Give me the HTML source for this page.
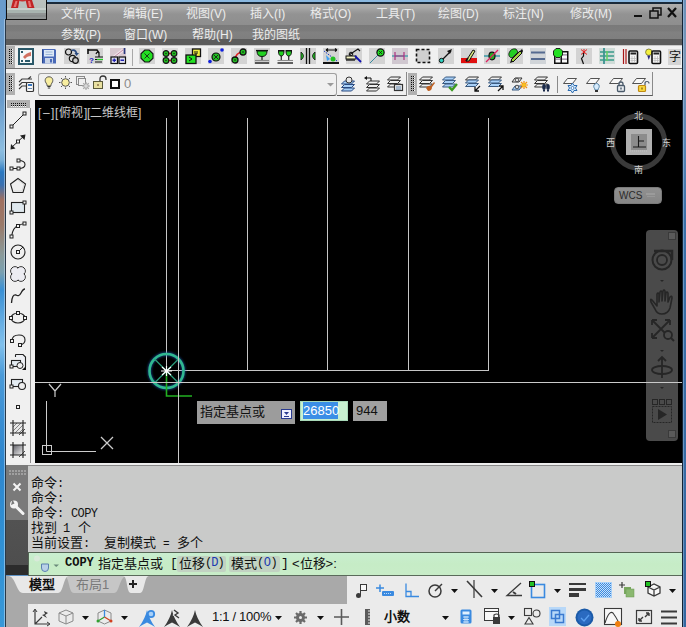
<!DOCTYPE html><html lang="zh-CN"><head><meta charset="utf-8"><style>
*{margin:0;padding:0;box-sizing:border-box}
html,body{width:686px;height:627px;overflow:hidden;background:#5f93c6;font-family:"Liberation Sans",sans-serif}
.a{position:absolute}
.t{position:absolute;white-space:nowrap}
svg{overflow:visible}
</style></head><body><div class="a" style="left:0px;top:0px;width:5px;height:627px;background:linear-gradient(to bottom,#6a9ccc 0,#6a9ccc 100px,#8cbde0 150px,#7ab0d8 160px,#2a78c0 172px,#3a70b0 185px,#a07060 200px,#9a7a6a 225px,#8a9a9a 255px,#7aa0b0 272px,#3a90d4 290px,#6ab0e4 325px,#80c0ec 345px,#4a9ad8 375px,#3a8ed2 420px,#2e86ce 460px,#3090d4 540px,#3898d8 627px)"></div>
<div class="a" style="left:682px;top:0px;width:4px;height:627px;background:linear-gradient(to bottom,#6a90b8 0,#7898b8 60px,#5a88b8 140px,#3a70a8 220px,#3468a0 627px)"></div>
<div class="a" style="left:682px;top:0px;width:1px;height:627px;background:#142232"></div>
<div class="a" style="left:683px;top:0px;width:1px;height:627px;background:rgba(200,225,250,.35)"></div>
<div class="a" style="left:6px;top:0px;width:676px;height:46px;background:linear-gradient(to bottom,#8ab8e0 0,#8ab8e0 2px,#1a2a3a 2px,#1a2a3a 4px,#b0aeac 4px,#a8a8a8 8px,#9c9c9c 11px,#939393 14px,#8e8e8e 25px,#7a7a7a 25px,#7c7c7c 31px,#818181 32px,#7f7f7f 39px,#5c5c5c 39px,#5c5c5c 45px,#c8c8c8 45px)"></div>
<div class="a" style="left:6px;top:0px;width:41px;height:20px;background:linear-gradient(to bottom,#bcc2be 0,#b8c0bc 8px,#c4cac6 9px,#a4aeac 11px,#96a09e 13px,#8c8c8c 18px);border:1px solid #101010;border-top:none"></div>
<svg class="a" style="left:6px;top:0px" width="41" height="20" viewBox="0 0 41 20"><path d="M5 8 L12 8 L13.5 0 L7 0Z M21.5 8 L28.5 8 L26 0 L19.5 0Z" fill="#c02424"/><path d="M12 0 Q16.5 3 21 0Z" fill="#c83030"/><path d="M7.5 7 L10 7 L11.5 1 L9.5 1Z M23 7 L25.5 7 L24 1 L22 1Z" fill="#e87070"/><rect x="1" y="8" width="39" height="2" fill="#c8d0cc"/><rect x="1" y="10" width="39" height="3" fill="#a8b4b0"/><rect x="1" y="13" width="39" height="6" fill="#909494"/><rect x="1" y="15" width="39" height="2" fill="#888c8c"/></svg>
<div class="a" style="left:4px;top:19px;width:1px;height:608px;background:rgba(220,235,250,.45)"></div>
<div class="a" style="left:5px;top:19px;width:1px;height:608px;background:#283848"></div>
<div class="t" style="left:61px;top:7px;color:#ececec;font-size:12px;line-height:14px">文件(F)</div>
<div class="t" style="left:123px;top:7px;color:#ececec;font-size:12px;line-height:14px">编辑(E)</div>
<div class="t" style="left:186px;top:7px;color:#ececec;font-size:12px;line-height:14px">视图(V)</div>
<div class="t" style="left:250px;top:7px;color:#ececec;font-size:12px;line-height:14px">插入(I)</div>
<div class="t" style="left:310px;top:7px;color:#ececec;font-size:12px;line-height:14px">格式(O)</div>
<div class="t" style="left:376px;top:7px;color:#ececec;font-size:12px;line-height:14px">工具(T)</div>
<div class="t" style="left:438px;top:7px;color:#ececec;font-size:12px;line-height:14px">绘图(D)</div>
<div class="t" style="left:503px;top:7px;color:#ececec;font-size:12px;line-height:14px">标注(N)</div>
<div class="t" style="left:570px;top:7px;color:#ececec;font-size:12px;line-height:14px">修改(M)</div>
<div class="t" style="left:61px;top:28px;color:#ececec;font-size:12px;line-height:14px">参数(P)</div>
<div class="t" style="left:124px;top:28px;color:#ececec;font-size:12px;line-height:14px">窗口(W)</div>
<div class="t" style="left:192px;top:28px;color:#ececec;font-size:12px;line-height:14px">帮助(H)</div>
<div class="t" style="left:252px;top:28px;color:#ececec;font-size:12px;line-height:14px">我的图纸</div>
<svg class="a" style="left:630px;top:6px" width="50" height="16" viewBox="0 0 50 16"><rect x="4" y="9" width="8" height="2" fill="#111"/><rect x="20" y="5" width="8" height="7" fill="none" stroke="#111" stroke-width="1.5"/><path d="M23 5 V2 H31 V9 H28" fill="none" stroke="#111" stroke-width="1.5"/><path d="M38 2 L46 11 M46 2 L38 11" stroke="#111" stroke-width="2.2"/></svg>
<div class="a" style="left:6px;top:46px;width:676px;height:23px;background:#f0f0f0;border-bottom:1px solid #707070"></div>
<svg class="a" style="left:6px;top:46px" width="9" height="22" viewBox="0 0 9 22"><rect width="9" height="22" fill="#b0b0b0"/><rect x="3" y="3" width="1" height="1" fill="#101010"/><rect x="5" y="3" width="1" height="1" fill="#101010"/><rect x="6" y="3" width="1" height="1" fill="#f8f8f8"/><rect x="3" y="5" width="1" height="1" fill="#101010"/><rect x="5" y="5" width="1" height="1" fill="#101010"/><rect x="6" y="5" width="1" height="1" fill="#f8f8f8"/><rect x="3" y="7" width="1" height="1" fill="#101010"/><rect x="5" y="7" width="1" height="1" fill="#101010"/><rect x="6" y="7" width="1" height="1" fill="#f8f8f8"/><rect x="3" y="9" width="1" height="1" fill="#101010"/><rect x="5" y="9" width="1" height="1" fill="#101010"/><rect x="6" y="9" width="1" height="1" fill="#f8f8f8"/><rect x="3" y="11" width="1" height="1" fill="#101010"/><rect x="5" y="11" width="1" height="1" fill="#101010"/><rect x="6" y="11" width="1" height="1" fill="#f8f8f8"/><rect x="3" y="13" width="1" height="1" fill="#101010"/><rect x="5" y="13" width="1" height="1" fill="#101010"/><rect x="6" y="13" width="1" height="1" fill="#f8f8f8"/><rect x="3" y="15" width="1" height="1" fill="#101010"/><rect x="5" y="15" width="1" height="1" fill="#101010"/><rect x="6" y="15" width="1" height="1" fill="#f8f8f8"/><rect x="3" y="17" width="1" height="1" fill="#101010"/><rect x="5" y="17" width="1" height="1" fill="#101010"/><rect x="6" y="17" width="1" height="1" fill="#f8f8f8"/></svg>
<svg class="a" style="left:18px;top:48px" width="16" height="16" viewBox="0 0 16 16"><rect x="1" y="1" width="14" height="15" fill="#f4f8f8" stroke="#2a5868" stroke-width="2"/><path d="M5 9 Q8 5 13 4 L13 8 Q9 8 7 11Z" fill="#d07060"/><rect x="3" y="3" width="2" height="2" fill="#2a5868"/><rect x="3" y="12" width="2" height="2" fill="#2a5868"/><rect x="7" y="12" width="5" height="2" fill="#2a5868"/></svg>
<svg class="a" style="left:41px;top:48px" width="16" height="16" viewBox="0 0 16 16"><path d="M1 1 H14 L15 2 V15.5 H1Z" fill="#4a6ab8"/><rect x="3" y="2" width="10" height="6.5" fill="#dce8f6"/><path d="M4.5 4H11.5M4.5 6.5H11.5" stroke="#8aa8d0" stroke-width=".8"/><rect x="4" y="10" width="8" height="5.5" fill="#c8d4e8"/><rect x="9" y="11" width="2" height="3.5" fill="#4a6ab8"/><path d="M1.5 1.5 V15" stroke="#2a4a90" stroke-width="1"/></svg>
<svg class="a" style="left:64px;top:48px" width="16" height="16" viewBox="0 0 16 16"><rect x="0" y="0" width="16" height="16" fill="#d3d3d3"/><circle cx="4.5" cy="4" r="3" fill="#d8d8d8" stroke="#111" stroke-width="1.2"/><circle cx="8.5" cy="10.5" r="3.2" fill="#d8d8d8" stroke="#111" stroke-width="1.2"/><circle cx="11.5" cy="12.5" r="2.8" fill="#c8c8c8" stroke="#111" stroke-width="1.2"/><path d="M7.5 2.5 Q11 1 12.5 5" stroke="#2a4a80" stroke-width="1.8" fill="none"/><path d="M10.5 5 L15 5 L12.5 8Z" fill="#2a4a80"/></svg>
<svg class="a" style="left:87px;top:48px" width="16" height="16" viewBox="0 0 16 16"><rect x="0" y="0" width="16" height="16" fill="#d3d3d3"/><path d="M1 1 V6 M1 2 H10 L12 5" stroke="#111" stroke-width="1.6" fill="none"/><path d="M9 6 Q10 3 12 5 V9" stroke="#111" stroke-width="1.2" fill="none"/><text x="2" y="15" font-size="8" font-family="Liberation Sans" fill="#2020c0" font-weight="bold">?</text><path d="M8 9H16M8 11.5H16M8 14H15" stroke="#111" stroke-width="1.2"/><path d="M10 11.5H16" stroke="#20d020" stroke-width="1.2"/></svg>
<svg class="a" style="left:110px;top:48px" width="16" height="16" viewBox="0 0 16 16"><rect x="0" y="0" width="16" height="16" fill="#dcd4d8"/><rect x="0" y="0" width="16" height="9" fill="#d8c8d0"/><path d="M4 9 L13 2" stroke="#f0e0e8" stroke-width="3"/><path d="M4 9 L13 2" stroke="#c090a8" stroke-width="1"/><path d="M14.5 0 V6" stroke="#2a3a80" stroke-width="1.6"/><rect x="1" y="9" width="6.5" height="6.5" fill="#e0e0f0" stroke="#111" stroke-width="1.2"/><rect x="9" y="9" width="6.5" height="6.5" fill="#e0e0f0" stroke="#111" stroke-width="1.2"/><path d="M2.5 12.25H6M4.25 10.5V14M10.5 12.25H14" stroke="#2020b0" stroke-width="1.3"/></svg>
<div class="a" style="left:132px;top:49px;width:1px;height:17px;background:#a8a8a8"></div>
<svg class="a" style="left:139px;top:48px" width="16" height="16" viewBox="0 0 16 16"><rect x="0" y="0" width="16" height="16" fill="#d3d3d3"/><path d="M5.8 2 H10.2 L14 5.8 V10.2 L10.2 14 H5.8 L2 10.2 V5.8Z" fill="#22e022" stroke="#111" stroke-width="1.1"/><path d="M5.5 5.5 L10.5 10.5 M10.5 5.5 L5.5 10.5" stroke="#111" stroke-width=".8"/></svg>
<svg class="a" style="left:162px;top:48px" width="16" height="16" viewBox="0 0 16 16"><rect x="0" y="0" width="16" height="16" fill="#dcdcdc"/><path d="M4 5.5H12M4 12.5H12" stroke="#d02020" stroke-width="1.5"/><circle cx="4" cy="5.5" r="2.8" fill="#22c022" stroke="#111" stroke-width="1.2"/><circle cx="4" cy="5.5" r=".7" fill="#111"/><circle cx="12" cy="5.5" r="2.8" fill="#22c022" stroke="#111" stroke-width="1.2"/><circle cx="12" cy="5.5" r=".7" fill="#111"/><circle cx="4" cy="12.5" r="2.8" fill="#22c022" stroke="#111" stroke-width="1.2"/><circle cx="4" cy="12.5" r=".7" fill="#111"/><circle cx="12" cy="12.5" r="2.8" fill="#22c022" stroke="#111" stroke-width="1.2"/><circle cx="12" cy="12.5" r=".7" fill="#111"/></svg>
<svg class="a" style="left:185px;top:48px" width="16" height="16" viewBox="0 0 16 16"><rect x="0" y="0" width="16" height="16" fill="#d3d3d3"/><rect x="7.5" y="1" width="8" height="7.5" fill="#f0f040" stroke="#111" stroke-width="1.3"/><path d="M10 3V6H12V3" stroke="#111" stroke-width="1" fill="none"/><rect x="1" y="7" width="10" height="8.5" fill="#22e022" stroke="#111" stroke-width="1.3"/><path d="M4 9 L7 11 L4 13" stroke="#111" stroke-width="1" fill="none"/></svg>
<svg class="a" style="left:208px;top:48px" width="16" height="16" viewBox="0 0 16 16"><rect x="0" y="0" width="16" height="16" fill="#d3d3d3"/><circle cx="8" cy="9" r="4" fill="#22c022" stroke="#111" stroke-width="1.2"/><path d="M6 7L10 11M10 7L6 11" stroke="#111" stroke-width=".8"/><circle cx="14" cy="2" r="1.8" fill="#1020e0"/><circle cx="2" cy="13.5" r="1.8" fill="#1020e0"/></svg>
<svg class="a" style="left:231px;top:48px" width="16" height="16" viewBox="0 0 16 16"><rect x="0" y="0" width="16" height="16" fill="#d3d3d3"/><path d="M4 12 Q4.5 4.5 12 4" stroke="#e02020" stroke-width="1.6" fill="none"/><circle cx="12" cy="4" r="3" fill="#22c022" stroke="#111" stroke-width="1.3"/><circle cx="4" cy="12" r="3" fill="#22c022" stroke="#111" stroke-width="1.3"/><circle cx="12" cy="4" r=".8" fill="#111"/><circle cx="4" cy="12" r=".8" fill="#111"/></svg>
<svg class="a" style="left:254px;top:48px" width="16" height="16" viewBox="0 0 16 16"><rect x="0" y="0" width="16" height="16" fill="#d3d3d3"/><path d="M2 2.5 H14" stroke="#111" stroke-width="1.2"/><path d="M3 3 Q3 8.5 8 8.5 Q13 8.5 13 3Z" fill="#22d022" stroke="#111" stroke-width="1"/><path d="M8 8.5 V12" stroke="#111" stroke-width="1.2"/><path d="M1 12.5 H15" stroke="#8a8a8a" stroke-width="1.2"/><path d="M1 15 H15" stroke="#111" stroke-width="1.3"/></svg>
<svg class="a" style="left:277px;top:48px" width="16" height="16" viewBox="0 0 16 16"><path d="M1 2.5 H7.5 M8.5 2.5 H15" stroke="#111" stroke-width="1.1"/><path d="M1.5 3 Q1.5 8 4.25 8 Q7 8 7 3Z M9 3 Q9 8 11.75 8 Q14.5 8 14.5 3Z" fill="#22d022" stroke="#111" stroke-width="1"/><path d="M4.25 8V12M11.75 8V12" stroke="#111" stroke-width="1.1"/><path d="M0.5 12.5 H16" stroke="#8a8a8a" stroke-width="1.1"/><path d="M0.5 15 H16" stroke="#111" stroke-width="1.3"/></svg>
<svg class="a" style="left:300px;top:48px" width="16" height="16" viewBox="0 0 16 16"><rect x="0" y="0" width="16" height="16" fill="#d3d3d3"/><path d="M6.5 0V16M9.5 0V16" stroke="#111" stroke-width="1.3"/><path d="M1 4 Q6 8 1 12Z M15 4 Q10 8 15 12Z" fill="#22c022" stroke="#111" stroke-width=".8"/></svg>
<svg class="a" style="left:323px;top:48px" width="16" height="16" viewBox="0 0 16 16"><rect x="0" y="0" width="16" height="16" fill="#d3d3d3"/><path d="M3 2H14M3 2L5 0.5M3 2L5 3.5M14 2L12 .5M14 2L12 3.5" stroke="#111" stroke-width="1.1" fill="none"/><path d="M1 3 L14 13" stroke="#2040c0" stroke-width="1" stroke-dasharray="1.5 1"/><path d="M3 7L7 11L4 13Z" fill="#40a0f0"/><circle cx="10" cy="11" r="2.5" fill="#22c022"/><rect x="0" y="14" width="16" height="2" fill="#111"/></svg>
<svg class="a" style="left:346px;top:48px" width="16" height="16" viewBox="0 0 16 16"><rect x="0" y="0" width="16" height="16" fill="#d3d3d3"/><path d="M3 7 L9 3 L12 1 L14 3" stroke="#111" stroke-width="1.1" fill="none"/><circle cx="5" cy="6" r="1.8" fill="none" stroke="#111" stroke-width="1"/><rect x="0" y="8" width="10" height="3" fill="#f0f0c0" stroke="#111" stroke-width="1"/><path d="M0 12H9" stroke="#111" stroke-width="1.3"/><path d="M9 8 L15 14" stroke="#1010b0" stroke-width="1.8"/></svg>
<svg class="a" style="left:369px;top:48px" width="16" height="16" viewBox="0 0 16 16"><rect x="0" y="0" width="16" height="16" fill="#d3d3d3"/><path d="M1 15 L10 6" stroke="#3a8aa0" stroke-width="1"/><circle cx="11.5" cy="4.5" r="3.6" fill="#22e022" stroke="#111" stroke-width="1.2"/><path d="M10 3L13 6M13 3L10 6" stroke="#111" stroke-width=".8"/></svg>
<svg class="a" style="left:392px;top:48px" width="16" height="16" viewBox="0 0 16 16"><rect width="16" height="16" fill="#d0c8d0"/><path d="M0 8H16" stroke="#3a9aa8" stroke-width="1.3"/><path d="M3 4V12M12 4V12" stroke="#b03080" stroke-width="1.2"/><path d="M3 8H12" stroke="#b03080" stroke-width="1"/></svg>
<svg class="a" style="left:415px;top:48px" width="16" height="16" viewBox="0 0 16 16"><rect x="1.5" y="1.5" width="13" height="13" fill="#d0d0d0" stroke="#111" stroke-width="1.6" stroke-dasharray="3 2"/></svg>
<svg class="a" style="left:438px;top:48px" width="16" height="16" viewBox="0 0 16 16"><rect x="0" y="0" width="16" height="16" fill="#d3d3d3"/><path d="M4 12 L13 3" stroke="#111" stroke-width="1.2"/><path d="M14 1 L9 3 L12 6Z" fill="#111"/><circle cx="3.5" cy="12.5" r="2.2" fill="#30d0c0" stroke="#111" stroke-width="1"/></svg>
<svg class="a" style="left:461px;top:48px" width="16" height="16" viewBox="0 0 16 16"><rect x="0" y="0" width="16" height="16" fill="#d3d3d3"/><rect x="0" y="10" width="16" height="5" fill="#e01010"/><path d="M5 13 L12 2 L14 3 L8 13Z" fill="#d8e880" stroke="#111" stroke-width="1"/><path d="M5 13 L7 10" stroke="#111" stroke-width="1.5"/></svg>
<svg class="a" style="left:484px;top:48px" width="16" height="16" viewBox="0 0 16 16"><rect x="0" y="0" width="16" height="16" fill="#d3d3d3"/><path d="M0 8H16" stroke="#3a9aa8" stroke-width="1.5"/><ellipse cx="8" cy="8" rx="3" ry="3.8" fill="#22b022" stroke="#111" stroke-width="1.2"/><path d="M2 14 L14 2" stroke="#e02060" stroke-width="1.2"/></svg>
<svg class="a" style="left:507px;top:48px" width="16" height="16" viewBox="0 0 16 16"><rect x="0" y="0" width="16" height="16" fill="#d3d3d3"/><path d="M2 5 Q4 0 9 1 L11 4 L5 10 Q1 9 2 5Z" fill="#22d022" stroke="#111" stroke-width=".8"/><path d="M4 12 L13 3 L15 5 L6 14Z" fill="#a0d040" stroke="#111" stroke-width="1"/><path d="M4 12 L3 15 L6 14" fill="#111"/><path d="M13 3 L15 1 L16 3 L15 5Z" fill="#111"/></svg>
<svg class="a" style="left:530px;top:48px" width="16" height="16" viewBox="0 0 16 16"><rect x="0" y="0" width="16" height="16" fill="#d0d4d8"/><path d="M1 4.5H15M1 11H15" stroke="#556a90" stroke-width="1.8"/></svg>
<svg class="a" style="left:553px;top:48px" width="16" height="16" viewBox="0 0 16 16"><rect x="1" y="3" width="14.5" height="13" fill="#111"/><g fill="#f8f8f8"><rect x="2.5" y="4.5" width="5" height="2"/><rect x="9" y="4.5" width="5" height="2"/><rect x="2.5" y="8" width="5" height="2"/><rect x="9" y="8" width="5" height="2"/><rect x="2.5" y="11.5" width="5" height="3"/><rect x="9" y="11.5" width="5" height="3"/></g><g fill="#c8b8d0"><rect x="9" y="6.5" width="5" height="1.5"/><rect x="9" y="10" width="5" height="1.5"/><rect x="2.5" y="10" width="5" height="1.5"/></g><path d="M3 0.5H7L9.5 3V7L7 9.5H3L0.5 7V3Z" fill="#22e022" stroke="#111" stroke-width=".9"/></svg>
<svg class="a" style="left:576px;top:48px" width="16" height="16" viewBox="0 0 16 16"><rect x="0" y="0" width="16" height="16" fill="#d3d3d3"/><path d="M5 1.5 L11 6.5 M11 1.5 L5 6.5 M8 1 V6" stroke="#e02020" stroke-width="1"/><path d="M7.5 5 V8 L5.5 10.5 L7.5 16" stroke="#111" stroke-width="1.2" fill="none"/></svg>
<svg class="a" style="left:599px;top:48px" width="16" height="16" viewBox="0 0 16 16"><rect width="16" height="16" fill="#d0dcd8"/><path d="M5 0V16" stroke="#2a8a8a" stroke-width="1.6"/><path d="M1 4H15M1 8H15M1 12H15" stroke="#3a9a8a" stroke-width="1.3"/><path d="M8 3V13" stroke="#60d060" stroke-width="1.5"/></svg>
<svg class="a" style="left:622px;top:48px" width="16" height="16" viewBox="0 0 16 16"><path d="M1.5 1V16M4 1V16" stroke="#a81818" stroke-width="1.2"/><rect x="7" y="3" width="8.5" height="12.5" rx="1" fill="#f4f4f4" stroke="#111" stroke-width="1.6"/><rect x="8.5" y="4.5" width="5.5" height="2" fill="#222"/><path d="M10 8V14M12.5 8V14M8.5 10.5H14M8.5 12.5H14" stroke="#b8b8b8" stroke-width=".7"/></svg>
<svg class="a" style="left:645px;top:48px" width="16" height="16" viewBox="0 0 16 16"><circle cx="3.8" cy="4.2" r="3.2" fill="#f4f040" stroke="#5a5a20" stroke-width=".7"/><path d="M2.2 7.5 L3.8 12 L5.4 7.5Z" fill="#2a2a80"/><rect x="7" y="3" width="8.5" height="12.5" rx="1" fill="#f4f4f4" stroke="#111" stroke-width="1.6"/><rect x="8.5" y="4.5" width="5.5" height="2" fill="#222"/><path d="M10 8V14M12.5 8V14M8.5 10.5H14M8.5 12.5H14" stroke="#b8b8b8" stroke-width=".7"/></svg>
<div class="a" style="left:668px;top:49px;width:13px;height:16px;background:#d4d4d4"></div>
<div class="t" style="left:669px;top:50px;font-size:12px;line-height:14px;color:#111">字</div>
<div class="a" style="left:6px;top:69px;width:676px;height:31px;background:#f0f0f0"></div>
<svg class="a" style="left:6px;top:73px" width="9" height="22" viewBox="0 0 9 22"><rect width="9" height="22" fill="#b0b0b0"/><rect x="3" y="3" width="1" height="1" fill="#101010"/><rect x="5" y="3" width="1" height="1" fill="#101010"/><rect x="6" y="3" width="1" height="1" fill="#f8f8f8"/><rect x="3" y="5" width="1" height="1" fill="#101010"/><rect x="5" y="5" width="1" height="1" fill="#101010"/><rect x="6" y="5" width="1" height="1" fill="#f8f8f8"/><rect x="3" y="7" width="1" height="1" fill="#101010"/><rect x="5" y="7" width="1" height="1" fill="#101010"/><rect x="6" y="7" width="1" height="1" fill="#f8f8f8"/><rect x="3" y="9" width="1" height="1" fill="#101010"/><rect x="5" y="9" width="1" height="1" fill="#101010"/><rect x="6" y="9" width="1" height="1" fill="#f8f8f8"/><rect x="3" y="11" width="1" height="1" fill="#101010"/><rect x="5" y="11" width="1" height="1" fill="#101010"/><rect x="6" y="11" width="1" height="1" fill="#f8f8f8"/><rect x="3" y="13" width="1" height="1" fill="#101010"/><rect x="5" y="13" width="1" height="1" fill="#101010"/><rect x="6" y="13" width="1" height="1" fill="#f8f8f8"/><rect x="3" y="15" width="1" height="1" fill="#101010"/><rect x="5" y="15" width="1" height="1" fill="#101010"/><rect x="6" y="15" width="1" height="1" fill="#f8f8f8"/><rect x="3" y="17" width="1" height="1" fill="#101010"/><rect x="5" y="17" width="1" height="1" fill="#101010"/><rect x="6" y="17" width="1" height="1" fill="#f8f8f8"/></svg>
<div class="a" style="left:38px;top:73px;width:299px;height:23px;border:1px solid #a0a0a0;border-bottom:1px solid #5a5a5a;border-radius:3px;background:#f0f0f0"></div>
<div class="a" style="left:337px;top:72px;width:70px;height:24px;border-bottom:1px solid #5a5a5a;border-right:1px solid #8a8a8a"></div>
<div class="a" style="left:417px;top:72px;width:236px;height:24px;border-bottom:1px solid #5a5a5a;border-right:1px solid #8a8a8a"></div>
<svg class="a" style="left:408px;top:73px" width="9" height="22" viewBox="0 0 9 22"><rect width="9" height="22" fill="#b0b0b0"/><rect x="3" y="3" width="1" height="1" fill="#101010"/><rect x="5" y="3" width="1" height="1" fill="#101010"/><rect x="6" y="3" width="1" height="1" fill="#f8f8f8"/><rect x="3" y="5" width="1" height="1" fill="#101010"/><rect x="5" y="5" width="1" height="1" fill="#101010"/><rect x="6" y="5" width="1" height="1" fill="#f8f8f8"/><rect x="3" y="7" width="1" height="1" fill="#101010"/><rect x="5" y="7" width="1" height="1" fill="#101010"/><rect x="6" y="7" width="1" height="1" fill="#f8f8f8"/><rect x="3" y="9" width="1" height="1" fill="#101010"/><rect x="5" y="9" width="1" height="1" fill="#101010"/><rect x="6" y="9" width="1" height="1" fill="#f8f8f8"/><rect x="3" y="11" width="1" height="1" fill="#101010"/><rect x="5" y="11" width="1" height="1" fill="#101010"/><rect x="6" y="11" width="1" height="1" fill="#f8f8f8"/><rect x="3" y="13" width="1" height="1" fill="#101010"/><rect x="5" y="13" width="1" height="1" fill="#101010"/><rect x="6" y="13" width="1" height="1" fill="#f8f8f8"/><rect x="3" y="15" width="1" height="1" fill="#101010"/><rect x="5" y="15" width="1" height="1" fill="#101010"/><rect x="6" y="15" width="1" height="1" fill="#f8f8f8"/><rect x="3" y="17" width="1" height="1" fill="#101010"/><rect x="5" y="17" width="1" height="1" fill="#101010"/><rect x="6" y="17" width="1" height="1" fill="#f8f8f8"/></svg>
<div class="a" style="left:557px;top:76px;width:1px;height:17px;background:#8a8a8a"></div>
<svg class="a" style="left:18px;top:76px" width="16" height="16" viewBox="0 0 16 16"><path d="M1 6 L4 3 H14 M1 9.5 L4 6.5 H9 M1 13 L4 10 H8 M10 3 L13 0.5" stroke="#3a3a3a" stroke-width="1.1" fill="none"/><rect x="8.5" y="6.5" width="7" height="9" rx="1" fill="#f8f8f8" stroke="#333" stroke-width="1.2"/><rect x="10" y="8" width="4" height="2" fill="#3a78c0"/><path d="M10 12.5 H14" stroke="#6a8ab0" stroke-width="1"/></svg>
<svg class="a" style="left:44px;top:76px" width="16" height="16" viewBox="0 0 16 16"><path d="M5 0.8 C1.5 0.8 0.6 4 1.5 6 C2.3 7.5 3 8 3.2 10 H6.8 C7 8 7.7 7.5 8.5 6 C9.4 4 8.5 .8 5 .8Z" fill="#f8eea0" stroke="#444" stroke-width=".9"/><path d="M3.5 10.5 H6.5 M3.8 12 H6.2" stroke="#333" stroke-width="1.2"/></svg>
<svg class="a" style="left:59px;top:76px" width="16" height="16" viewBox="0 0 16 16"><circle cx="6.5" cy="6.5" r="3.8" fill="#f8eea0" stroke="#444" stroke-width=".9"/><path d="M6.5 0V1.5M6.5 11.5V13M0 6.5H1.5M11.5 6.5H13M2 2L3 3M10 10L11 11M11 2L10 3M2 11L3 10" stroke="#444" stroke-width=".9"/></svg>
<svg class="a" style="left:76px;top:76px" width="16" height="16" viewBox="0 0 16 16"><rect x="0.5" y="0.5" width="8" height="8" fill="none" stroke="#8a8a8a" stroke-width="1"/><rect x="2.5" y="2.5" width="7" height="7" fill="#f0f0f0" stroke="#8a8a8a" stroke-width="1"/><g stroke="#a8a8a8" stroke-width="1.1"><path d="M10 6V14M6 10H14M7.2 7.2L12.8 12.8M12.8 7.2L7.2 12.8"/></g><circle cx="10" cy="10" r="2.3" fill="#d8d8d8" stroke="#a0a0a0" stroke-width=".8"/></svg>
<svg class="a" style="left:93px;top:76px" width="16" height="16" viewBox="0 0 16 16"><path d="M7 6 V3 Q7 0 10 0 Q13 0 13 3 V4" stroke="#333" stroke-width="1.3" fill="none"/><rect x="0.5" y="5.5" width="9" height="7" fill="#e8e0a0" stroke="#5a5a3a" stroke-width="1"/><rect x="4.5" y="8" width="1" height="2" fill="#5a3a1a"/></svg>
<div class="a" style="left:110px;top:79px;width:10px;height:10px;border:2px solid #111;background:#fff"></div>
<div class="t" style="left:124px;top:77px;font-size:13px;line-height:14px;color:#8a8a8a">0</div>
<svg class="a" style="left:327px;top:83px" width="8" height="4" viewBox="0 0 8 4"><path d="M0 0H7L3.5 3.5Z" fill="#9a9a9a"/></svg>
<svg class="a" style="left:341px;top:76px" width="16" height="16" viewBox="0 0 16 16"><path d="M0.5 8.0 L3.5 5.0 H13.5 L10.5 8.0Z" fill="#a8d0f8" stroke="#2a4a80" stroke-width="1"/><path d="M0.5 11.5 L3.5 8.5 H13.5 L10.5 11.5Z" fill="#a8d0f8" stroke="#2a4a80" stroke-width="1"/><path d="M0.5 15.0 L3.5 12.0 H13.5 L10.5 15.0Z" fill="#a8d0f8" stroke="#2a4a80" stroke-width="1"/><circle cx="8" cy="4" r="3" fill="#e8e8e8" stroke="#333" stroke-width="1"/></svg>
<svg class="a" style="left:364px;top:76px" width="16" height="16" viewBox="0 0 16 16"><path d="M2.5 8.0 L5.5 5.0 H15.5 L12.5 8.0Z" fill="#f0f0f0" stroke="#333" stroke-width="1"/><path d="M2.5 11.5 L5.5 8.5 H15.5 L12.5 11.5Z" fill="#f0f0f0" stroke="#333" stroke-width="1"/><path d="M2.5 15.0 L5.5 12.0 H15.5 L12.5 15.0Z" fill="#f0f0f0" stroke="#333" stroke-width="1"/><path d="M2 2 H7 V5" stroke="#111" stroke-width="1" fill="none"/><path d="M0 2 L3 0 V4Z" fill="#111"/></svg>
<svg class="a" style="left:387px;top:76px" width="16" height="16" viewBox="0 0 16 16"><path d="M0.5 4.0 L3.5 1.0 H13.5 L10.5 4.0Z" fill="#f0f0f0" stroke="#333" stroke-width="1"/><path d="M0.5 7.5 L3.5 4.5 H13.5 L10.5 7.5Z" fill="#f0f0f0" stroke="#333" stroke-width="1"/><path d="M0.5 11.0 L3.5 8.0 H13.5 L10.5 11.0Z" fill="#f0f0f0" stroke="#333" stroke-width="1"/><rect x="7.5" y="8.5" width="8" height="6" fill="#f0f0f0" stroke="#333" stroke-width="1.2"/><path d="M9 11H14M9 13H14" stroke="#3a6aa0" stroke-width=".8"/></svg>
<svg class="a" style="left:419px;top:76px" width="16" height="16" viewBox="0 0 16 16"><path d="M0.5 4.0 L3.5 1.0 H13.5 L10.5 4.0Z" fill="#f0f0f0" stroke="#333" stroke-width="1"/><path d="M0.5 7.5 L3.5 4.5 H13.5 L10.5 7.5Z" fill="#f0f0f0" stroke="#333" stroke-width="1"/><path d="M0.5 11.0 L3.5 8.0 H13.5 L10.5 11.0Z" fill="#f0f0f0" stroke="#333" stroke-width="1"/><path d="M7 12 Q9 9 12 10 L15 6 L16 7 L13 11 Q13 15 9 15Z" fill="#c06020"/></svg>
<svg class="a" style="left:442px;top:76px" width="16" height="16" viewBox="0 0 16 16"><path d="M0.5 4.0 L3.5 1.0 H13.5 L10.5 4.0Z" fill="#a8d0f8" stroke="#3a5a80" stroke-width="1"/><path d="M0.5 7.5 L3.5 4.5 H13.5 L10.5 7.5Z" fill="#a8d0f8" stroke="#3a5a80" stroke-width="1"/><path d="M0.5 11.0 L3.5 8.0 H13.5 L10.5 11.0Z" fill="#a8d0f8" stroke="#3a5a80" stroke-width="1"/><path d="M7 11 L10 14 L15 8" stroke="#3a9a20" stroke-width="2.2" fill="none"/></svg>
<svg class="a" style="left:465px;top:76px" width="16" height="16" viewBox="0 0 16 16"><path d="M0.5 4.0 L3.5 1.0 H13.5 L10.5 4.0Z" fill="#f0f0f0" stroke="#333" stroke-width="1"/><path d="M0.5 7.0 L3.5 4.0 H13.5 L10.5 7.0Z" fill="#a8d0f8" stroke="#3a5a80" stroke-width="1"/><path d="M0.5 10.5 L3.5 7.5 H13.5 L10.5 10.5Z" fill="#a8d0f8" stroke="#3a5a80" stroke-width="1"/><path d="M15 10 L10 15 M10 11V15H14" stroke="#111" stroke-width="1.3" fill="none"/></svg>
<svg class="a" style="left:488px;top:76px" width="16" height="16" viewBox="0 0 16 16"><path d="M0.5 4.0 L3.5 1.0 H13.5 L10.5 4.0Z" fill="#f0f0f0" stroke="#333" stroke-width="1"/><path d="M0.5 7.0 L3.5 4.0 H13.5 L10.5 7.0Z" fill="#a8d0f8" stroke="#3a5a80" stroke-width="1"/><path d="M0.5 10.5 L3.5 7.5 H13.5 L10.5 10.5Z" fill="#a8d0f8" stroke="#3a5a80" stroke-width="1"/><path d="M10 15 L15 10 M11 10H15V14" stroke="#111" stroke-width="1.3" fill="none"/></svg>
<svg class="a" style="left:511px;top:76px" width="16" height="16" viewBox="0 0 16 16"><path d="M1 6 L4 2 H11 L8 6Z" fill="#f0f0f0" stroke="#333"/><path d="M1 14 L4 10 H11 L8 14Z" fill="#a8d0f8" stroke="#3a5a80"/><circle cx="6" cy="4" r="1.8" fill="#ddd" stroke="#333" stroke-width=".8"/><circle cx="6" cy="11" r="1.8" fill="#ddd" stroke="#333" stroke-width=".8"/><path d="M13 5V13M9 9H17M10 6L16 12M16 6L10 12" stroke="#f09010" stroke-width="1.2"/><circle cx="13" cy="9" r="2" fill="#f8c020"/></svg>
<svg class="a" style="left:534px;top:76px" width="16" height="16" viewBox="0 0 16 16"><path d="M0.5 4.0 L3.5 1.0 H13.5 L10.5 4.0Z" fill="#f0f0f0" stroke="#333" stroke-width="1"/><path d="M0.5 7.5 L3.5 4.5 H13.5 L10.5 7.5Z" fill="#f0f0f0" stroke="#333" stroke-width="1"/><path d="M0.5 11.0 L3.5 8.0 H13.5 L10.5 11.0Z" fill="#f0f0f0" stroke="#333" stroke-width="1"/><ellipse cx="10" cy="11" rx="1.8" ry="3" fill="#1a2a4a"/><ellipse cx="14" cy="11" rx="1.8" ry="3" fill="#1a2a4a"/><rect x="9" y="14" width="2" height="1.5" fill="#1a2a4a"/><rect x="13" y="14" width="2" height="1.5" fill="#1a2a4a"/></svg>
<svg class="a" style="left:563px;top:76px" width="16" height="16" viewBox="0 0 16 16"><path d="M0.5 7.5 L4.5 2.5 H13.5 L9.5 7.5Z" fill="#f8f8f8" stroke="#404040" stroke-width=".9"/><g stroke="#2a6ab0" stroke-width="1" fill="#d8ecfc"><path d="M9.5 7 L11 9.5 L14 9.5 L12.5 12 L14 14.5 L11 14.5 L9.5 17 L8 14.5 L5 14.5 L6.5 12 L5 9.5 L8 9.5Z"/></g><circle cx="9.5" cy="12" r="1.5" fill="#fff" stroke="#2a6ab0" stroke-width=".8"/></svg>
<svg class="a" style="left:586px;top:76px" width="16" height="16" viewBox="0 0 16 16"><path d="M0.5 7.5 L4.5 2.5 H13.5 L9.5 7.5Z" fill="#f8f8f8" stroke="#404040" stroke-width=".9"/><path d="M10.5 7.5 C8 7.5 7.3 10 8 11.5 C8.5 12.5 9 13 9 14 H12 C12 13 12.5 12.5 13 11.5 C13.7 10 13 7.5 10.5 7.5Z" fill="#d8ecfc" stroke="#4a7aa0" stroke-width=".9"/><rect x="9" y="14" width="3" height="2" fill="#333"/></svg>
<svg class="a" style="left:609px;top:76px" width="16" height="16" viewBox="0 0 16 16"><path d="M0.5 7.5 L4.5 2.5 H13.5 L9.5 7.5Z" fill="#f8f8f8" stroke="#404040" stroke-width=".9"/><path d="M10 9.5 V8 Q10 6 12 6 Q14 6 14 8 V9.5" stroke="#4a5a6a" stroke-width="1.3" fill="none"/><rect x="8.5" y="9.5" width="7" height="6" rx="1" fill="#e8ecf0" stroke="#4a5a6a" stroke-width="1.3"/><rect x="11.3" y="11.5" width="1.4" height="2" fill="#4a5a6a"/></svg>
<svg class="a" style="left:632px;top:76px" width="16" height="16" viewBox="0 0 16 16"><path d="M0.5 7.5 L4.5 2.5 H13.5 L9.5 7.5Z" fill="#f8f8f8" stroke="#404040" stroke-width=".9"/><path d="M13 9.5 V7.5 Q13 5.5 15 5.5 Q17 5.5 17 7.5" stroke="#4a5a6a" stroke-width="1.2" fill="none"/><rect x="6.5" y="9.5" width="7" height="6" rx="1" fill="#f8d840" stroke="#c08a10" stroke-width="1.2"/><rect x="9.3" y="11.5" width="1.4" height="2" fill="#8a6a10"/></svg>
<div class="a" style="left:6px;top:100px;width:29px;height:363px;background:#f0f0f0"></div>
<div class="a" style="left:30px;top:108px;width:1px;height:355px;background:#8c8c8c"></div>
<svg class="a" style="left:7px;top:100px" width="23" height="8" viewBox="0 0 23 8"><rect width="23" height="8" fill="#b0b0b0"/><rect x="4" y="3" width="1" height="1" fill="#101010"/><rect x="4" y="5" width="1" height="1" fill="#101010"/><rect x="4" y="6" width="1" height="1" fill="#f8f8f8"/><rect x="6" y="3" width="1" height="1" fill="#101010"/><rect x="6" y="5" width="1" height="1" fill="#101010"/><rect x="6" y="6" width="1" height="1" fill="#f8f8f8"/><rect x="8" y="3" width="1" height="1" fill="#101010"/><rect x="8" y="5" width="1" height="1" fill="#101010"/><rect x="8" y="6" width="1" height="1" fill="#f8f8f8"/><rect x="10" y="3" width="1" height="1" fill="#101010"/><rect x="10" y="5" width="1" height="1" fill="#101010"/><rect x="10" y="6" width="1" height="1" fill="#f8f8f8"/><rect x="12" y="3" width="1" height="1" fill="#101010"/><rect x="12" y="5" width="1" height="1" fill="#101010"/><rect x="12" y="6" width="1" height="1" fill="#f8f8f8"/><rect x="14" y="3" width="1" height="1" fill="#101010"/><rect x="14" y="5" width="1" height="1" fill="#101010"/><rect x="14" y="6" width="1" height="1" fill="#f8f8f8"/><rect x="16" y="3" width="1" height="1" fill="#101010"/><rect x="16" y="5" width="1" height="1" fill="#101010"/><rect x="16" y="6" width="1" height="1" fill="#f8f8f8"/><rect x="18" y="3" width="1" height="1" fill="#101010"/><rect x="18" y="5" width="1" height="1" fill="#101010"/><rect x="18" y="6" width="1" height="1" fill="#f8f8f8"/></svg>
<div class="a" style="left:35px;top:100px;width:647px;height:363px;background:#000"></div>
<svg class="a" style="left:0px;top:0px;pointer-events:none" width="686" height="627" viewBox="0 0 686 627"><rect x="166" y="118" width="1" height="253" fill="#c6c6c6"/><rect x="247" y="118" width="1" height="253" fill="#c6c6c6"/><rect x="327" y="118" width="1" height="253" fill="#c6c6c6"/><rect x="408" y="118" width="1" height="253" fill="#c6c6c6"/><rect x="488" y="118" width="1" height="253" fill="#c6c6c6"/><rect x="166" y="370" width="323" height="1" fill="#c6c6c6"/></svg>
<div class="t" style="left:38px;top:106px;font-size:12px;line-height:14px;color:#c8c8c8">[</div>
<div class="t" style="left:43px;top:106px;font-size:12px;line-height:14px;color:#c8c8c8">–</div>
<div class="t" style="left:51px;top:106px;font-size:12px;line-height:14px;color:#c8c8c8">]</div>
<div class="t" style="left:55px;top:106px;font-size:12px;line-height:14px;color:#c8c8c8">[</div>
<div class="t" style="left:59px;top:106px;font-size:12px;line-height:14px;color:#c8c8c8">俯视</div>
<div class="t" style="left:84px;top:106px;font-size:12px;line-height:14px;color:#c8c8c8">]</div>
<div class="t" style="left:87px;top:106px;font-size:12px;line-height:14px;color:#c8c8c8">[</div>
<div class="t" style="left:90px;top:106px;font-size:12px;line-height:14px;color:#c8c8c8">二维线框</div>
<div class="t" style="left:138px;top:106px;font-size:12px;line-height:14px;color:#c8c8c8">]</div>
<svg class="a" style="left:35px;top:380px" width="100" height="83" viewBox="0 0 100 83"><path d="M11.5 21 V71.5 H61" stroke="#cccccc" stroke-width="1" fill="none"/><rect x="7.5" y="65.5" width="9" height="9" fill="none" stroke="#cccccc" stroke-width="1"/><path d="M14 4 L20 11 L26 4 M20 11 V17" stroke="#cccccc" stroke-width="1.2" fill="none"/><path d="M66 57 L78 69 M78 57 L66 69" stroke="#cccccc" stroke-width="1.3"/></svg>
<svg class="a" style="left:140px;top:345px" width="60" height="55" viewBox="0 0 60 55"><defs><filter id="gl" x="-50%" y="-50%" width="200%" height="200%"><feGaussianBlur stdDeviation="1"/></filter></defs><circle cx="26.5" cy="26" r="17" fill="none" stroke="#2060c0" stroke-width="4" opacity=".6" filter="url(#gl)"/><circle cx="26.5" cy="26" r="17" fill="none" stroke="#30b890" stroke-width="2.6"/><path d="M14.5 14 L38.5 38 M38.5 14 L14.5 38" stroke="#2a9a7a" stroke-width="1.3"/><path d="M26.5 28 V51 H52" stroke="#22b022" stroke-width="1.6" fill="none"/><path d="M22 22 L31 30 M31 22 L22 30 M26.5 21 V31 M21 26 H32" stroke="#ffffff" stroke-width="1.2"/></svg>
<div class="a" style="left:35px;top:382px;width:647px;height:1px;background:#cacaca;z-index:5"></div>
<div class="a" style="left:178px;top:100px;width:1px;height:363px;background:#cacaca;z-index:5"></div>
<div class="a" style="left:197px;top:401px;width:98px;height:23px;background:#9c9c9c"></div>
<div class="t" style="left:200px;top:404px;font-size:13px;line-height:16px;color:#111">指定基点或</div>
<svg class="a" style="left:281px;top:409px" width="11" height="10" viewBox="0 0 11 10"><rect x=".5" y=".5" width="10" height="9" fill="#f0f0ff" stroke="#2a3a90"/><path d="M3 3 H8 L5.5 6Z" fill="#2a3a90"/><rect x="3" y="7" width="5" height="1" fill="#2a3a90"/></svg>
<div class="a" style="left:300px;top:401px;width:48px;height:20px;background:#c8f0d0;border:1px solid #a8d8b8"></div>
<div class="a" style="left:303px;top:402px;width:35px;height:17px;background:#3b8ee6"></div>
<div class="t" style="left:303px;top:403px;font-size:13px;line-height:15px;color:#fff">26850</div>
<div class="a" style="left:353px;top:401px;width:34px;height:20px;background:#a0a0a0"></div>
<div class="t" style="left:356px;top:403px;font-size:13px;line-height:15px;color:#111">944</div>
<svg class="a" style="left:600px;top:100px" width="80" height="80" viewBox="0 0 80 80"><circle cx="38.6" cy="42" r="26" fill="none" stroke="#3a3a3a" stroke-width="5"/><rect x="26" y="29" width="26" height="26" fill="#b0b0b0"/><rect x="31" y="34" width="16" height="16" fill="#8c8c8c"/><path d="M33 47 H46 M38.5 36 V47 M38.5 41 H44" stroke="#1a1a1a" stroke-width="1.1"/><path d="M30 51 H48" stroke="#c8c8c8" stroke-width=".8" stroke-dasharray="1 1"/></svg>
<div class="t" style="left:634px;top:111px;font-size:9px;line-height:10px;color:#d0d0d0">北</div>
<div class="t" style="left:634px;top:165px;font-size:9px;line-height:10px;color:#d0d0d0">南</div>
<div class="t" style="left:606px;top:138px;font-size:9px;line-height:10px;color:#d0d0d0">西</div>
<div class="t" style="left:662px;top:138px;font-size:9px;line-height:10px;color:#d0d0d0">东</div>
<div class="a" style="left:614px;top:187px;width:48px;height:17px;background:linear-gradient(#909090,#868686);border:1px solid #7a7a7a;border-radius:4px"></div>
<div class="t" style="left:619px;top:189px;font-size:10px;line-height:13px;color:#2a2a2a">WCS</div>
<svg class="a" style="left:646px;top:192px" width="10" height="6" viewBox="0 0 10 6"><path d="M0 2H9" stroke="#a0a0a0" stroke-width="1.5"/><path d="M1 4.5H9" stroke="#989898" stroke-width="1"/></svg>
<div class="a" style="left:646px;top:230px;width:32px;height:211px;background:#4a4a4a;border-radius:4px"></div>
<svg class="a" style="left:646px;top:230px" width="32" height="211" viewBox="0 0 32 211"><rect x="22.5" y="2.5" width="7" height="7" fill="#5a5a5a" stroke="#3a3a3a"/><rect x="22.5" y="200.5" width="7" height="7" fill="#5a5a5a" stroke="#3a3a3a"/><circle cx="16" cy="30" r="9.5" fill="none" stroke="#262626" stroke-width="2"/><circle cx="16" cy="30" r="5" fill="none" stroke="#262626" stroke-width="1.8"/><path d="M8 21 H26 V30" stroke="#262626" stroke-width="2.5" fill="none"/><path d="M14 50 L16 52 L18 50Z M14 120 L16 122 L18 120Z M14 157 L16 159 L18 157Z" fill="#262626"/><path d="M11 76 L6 70 Q4 68 5 72 L9 79 Q11 84 16 84 Q22 84 24 78 L26 68 Q26 65 24 67 L22 72 V63 Q21 61 20 63 L19 71 V61 Q18 59 17 61 L16 71 V62 Q15 60 14 62 L13 72 V64 Q12 62 11 64 Z" fill="none" stroke="#262626" stroke-width="1.6" stroke-linejoin="round"/><path d="M6 90 L24 108 M24 90 L6 108 M6 90 V95 M6 90 H11 M24 90 H19 M24 90 V95 M6 108 V103 M6 108 H11" stroke="#262626" stroke-width="1.8" fill="none"/><circle cx="22" cy="105" r="4" fill="#4a4a4a" stroke="#262626" stroke-width="1.8"/><path d="M25 108 L28 111" stroke="#262626" stroke-width="2"/><path d="M16 127 V148 M12 131 L16 127 L20 131" stroke="#262626" stroke-width="1.8" fill="none"/><ellipse cx="16" cy="140" rx="10" ry="4" fill="none" stroke="#262626" stroke-width="1.8"/><rect x="6.5" y="169.5" width="5" height="5" fill="none" stroke="#262626"/><rect x="13.5" y="169.5" width="5" height="5" fill="none" stroke="#262626"/><rect x="20.5" y="169.5" width="5" height="5" fill="none" stroke="#262626"/><rect x="6.5" y="176.5" width="19" height="16" fill="none" stroke="#262626" stroke-dasharray="2 1"/><path d="M12 179 L21 184.5 L12 190Z" fill="#262626"/></svg>
<div class="a" style="left:6px;top:463px;width:676px;height:2px;background:#eeeeee"></div>
<div class="a" style="left:6px;top:465px;width:676px;height:1px;background:#8a8a8a"></div>
<div class="a" style="left:6px;top:466px;width:676px;height:109px;background:#c9cac9"></div>
<div class="a" style="left:6px;top:465px;width:22px;height:110px;background:linear-gradient(to bottom,#7a7a7a 0,#7a7a7a 55px,#525252 55px,#4e4e4e 100px,#2c2c2c 100px)"></div>
<div class="a" style="left:28px;top:552px;width:654px;height:24px;background:linear-gradient(#c9eed0,#c6ecc6 50%,#c8ecc8);border-top:1px solid #556555;border-bottom:1px solid #5a6a5a;border-left:1px solid #556555"></div>
<div class="a" style="left:6px;top:576px;width:676px;height:51px;background:#ebebeb"></div>
<div class="a" style="left:6px;top:576px;width:341px;height:28px;background:#a9a9a9"></div>
<div class="a" style="left:6px;top:604px;width:22px;height:23px;background:#a9a9a9"></div>
<svg class="a" style="left:6px;top:465px" width="22" height="60" viewBox="0 0 22 60"><rect x="3" y="5" width="2" height="2" fill="#a0a0a0"/><rect x="3" y="8" width="2" height="2" fill="#a0a0a0"/><rect x="6" y="5" width="2" height="2" fill="#a0a0a0"/><rect x="6" y="8" width="2" height="2" fill="#a0a0a0"/><rect x="9" y="5" width="2" height="2" fill="#a0a0a0"/><rect x="9" y="8" width="2" height="2" fill="#a0a0a0"/><rect x="12" y="5" width="2" height="2" fill="#a0a0a0"/><rect x="12" y="8" width="2" height="2" fill="#a0a0a0"/><rect x="15" y="5" width="2" height="2" fill="#a0a0a0"/><rect x="15" y="8" width="2" height="2" fill="#a0a0a0"/><rect x="18" y="5" width="2" height="2" fill="#a0a0a0"/><rect x="18" y="8" width="2" height="2" fill="#a0a0a0"/><path d="M7.5 18.5 L14.5 25.5 M14.5 18.5 L7.5 25.5" stroke="#f4f4f4" stroke-width="2"/><path d="M9.5 41 L17 48.5" stroke="#f4f4f4" stroke-width="3" stroke-linecap="round"/><circle cx="8" cy="39.5" r="4" fill="#f4f4f4"/><path d="M6.5 34.5 L8.5 38.5 L5 40Z" fill="#7a7a7a"/></svg>
<div class="t" style="left:31px;top:475px;font-size:13px;line-height:15px;color:#111">命令</div>
<div class="t" style="left:57px;top:475px;font-family:Liberation Mono,monospace;font-size:12px;line-height:18px;letter-spacing:-0.6px;color:#111">:</div>
<div class="t" style="left:31px;top:490px;font-size:13px;line-height:15px;color:#111">命令</div>
<div class="t" style="left:57px;top:490px;font-family:Liberation Mono,monospace;font-size:12px;line-height:18px;letter-spacing:-0.6px;color:#111">:</div>
<div class="t" style="left:31px;top:505px;font-size:13px;line-height:15px;color:#111">命令</div>
<div class="t" style="left:57px;top:505px;font-family:Liberation Mono,monospace;font-size:12px;line-height:18px;letter-spacing:-0.6px;color:#111">:</div>
<div class="t" style="left:71px;top:505px;font-family:Liberation Mono,monospace;font-size:12px;line-height:18px;letter-spacing:-0.6px;color:#111">COPY</div>
<div class="t" style="left:31px;top:520px;font-size:13px;line-height:15px;color:#111">找到</div>
<div class="t" style="left:63px;top:520px;font-family:Liberation Mono,monospace;font-size:12px;line-height:18px;letter-spacing:-0.6px;color:#111">1</div>
<div class="t" style="left:78px;top:520px;font-size:13px;line-height:15px;color:#111">个</div>
<div class="t" style="left:31px;top:535px;font-size:13px;line-height:15px;color:#111">当前设置</div>
<div class="t" style="left:83px;top:535px;font-family:Liberation Mono,monospace;font-size:12px;line-height:18px;letter-spacing:-0.6px;color:#111">:</div>
<div class="t" style="left:104px;top:535px;font-size:13px;line-height:15px;color:#111">复制模式</div>
<div class="t" style="left:163px;top:535px;font-family:Liberation Mono,monospace;font-size:12px;line-height:18px;letter-spacing:-0.6px;color:#111;font-size:11px">=</div>
<div class="t" style="left:177px;top:535px;font-size:13px;line-height:15px;color:#111">多个</div>
<svg class="a" style="left:30px;top:554px" width="30" height="20" viewBox="0 0 30 20"><circle cx="7" cy="4.5" r="3" fill="#dde8dd" opacity=".8"/><path d="M11.5 10 V14 Q11.5 17.5 15 17.5 Q18.5 17.5 18.5 14 V10Z" fill="#b8d0e8" stroke="#5a80b0" stroke-width="1"/><path d="M23.5 10.5 H29 L26.25 13Z" fill="#6a8a7a"/></svg>
<div class="t" style="left:65px;top:556px;font-family:Liberation Mono,monospace;font-size:12px;line-height:15px;font-weight:bold;color:#111">COPY</div>
<div class="t" style="left:98px;top:556px;font-size:13px;line-height:15px;color:#111">指定基点或</div>
<div class="t" style="left:170px;top:556px;font-family:Liberation Mono,monospace;font-size:13px;line-height:15px;color:#111">[</div>
<div class="a" style="left:177px;top:556px;width:49px;height:16px;background:#c2d2c2;border-radius:2px"></div>
<div class="t" style="left:179px;top:556px;font-size:13px;line-height:15px;color:#111">位移</div>
<div class="t" style="left:205px;top:556px;font-family:Liberation Mono,monospace;font-size:12px;line-height:15px;letter-spacing:-1px;color:#111">(<span style="color:#1a3ab0">D</span>)</div>
<div class="a" style="left:229px;top:556px;width:51px;height:16px;background:#c2d2c2;border-radius:2px"></div>
<div class="t" style="left:231px;top:556px;font-size:13px;line-height:15px;color:#111">模式</div>
<div class="t" style="left:257px;top:556px;font-family:Liberation Mono,monospace;font-size:12px;line-height:15px;letter-spacing:-0.5px;color:#111">(<span style="color:#1a3ab0">O</span>)</div>
<div class="t" style="left:281px;top:556px;font-family:Liberation Mono,monospace;font-size:13px;line-height:15px;color:#111">]</div>
<div class="t" style="left:292px;top:556px;font-size:13px;line-height:15px;color:#111">&lt;位移&gt;:</div>
<svg class="a" style="left:6px;top:575px" width="150" height="20" viewBox="0 0 150 20"><path d="M58 1 C64 1 62 18 68 18 H108 C114 18 113 1 121 1 Z" fill="#c6c6c6"/><path d="M2 1 C10 1 10 18 17 18 H52 C58 18 57 1 63 1 Z" fill="#e8e8e8"/><path d="M117 1 C122 1 120 18 125 18 H134 C139 18 138 1 143 1 Z" fill="#e8e8e8"/></svg>
<div class="t" style="left:29px;top:577px;font-size:13px;line-height:15px;color:#111;font-weight:bold">模型</div>
<div class="t" style="left:76px;top:577px;font-size:13px;line-height:15px;color:#7a7a7a">布局1</div>
<svg class="a" style="left:128px;top:579px" width="10" height="10" viewBox="0 0 10 10"><path d="M5 1V9M1 5H9" stroke="#222" stroke-width="2"/></svg>
<svg class="a" style="left:10px;top:112px" width="16" height="16" viewBox="0 0 16 16"><path d="M2 14 L14.5 1.5" stroke="#222" stroke-width="1"/><rect x="0.0" y="13.0" width="3" height="3" fill="#f4f4f4" stroke="#222" stroke-width="1"/><rect x="13.0" y="0.0" width="3" height="3" fill="#f4f4f4" stroke="#222" stroke-width="1"/></svg>
<svg class="a" style="left:10px;top:134px" width="16" height="16" viewBox="0 0 16 16"><path d="M1 14 L15 1" stroke="#222" stroke-width="1"/><path d="M0.5 15.5 L1 10 L5.5 14.5Z M15.5 0.5 L10 1.5 L14.5 6Z" fill="#222"/><rect x="6.5" y="6.0" width="3" height="3" fill="#f4f4f4" stroke="#222" stroke-width="1"/></svg>
<svg class="a" style="left:10px;top:156px" width="16" height="16" viewBox="0 0 16 16"><path d="M1.5 12.5 H8.5 M8.5 4.5 Q15 4.5 15 8.5 Q15 12.5 8.5 12.5" stroke="#222" stroke-width="1.1" fill="none"/><rect x="0.0" y="11.0" width="3" height="3" fill="#f4f4f4" stroke="#222" stroke-width="1"/><rect x="7.0" y="11.0" width="3" height="3" fill="#f4f4f4" stroke="#222" stroke-width="1"/><rect x="7.0" y="3.0" width="3" height="3" fill="#f4f4f4" stroke="#222" stroke-width="1"/></svg>
<svg class="a" style="left:10px;top:178px" width="16" height="16" viewBox="0 0 16 16"><path d="M8 0.5 L15.5 6 L13 14.5 H3 L0.5 6Z" fill="#f0f0f0" stroke="#222" stroke-width="1.1"/><path d="M8 2 L14 6.5 L12 13 H4" fill="none" stroke="#d8d8d8" stroke-width="1"/></svg>
<svg class="a" style="left:10px;top:200px" width="16" height="16" viewBox="0 0 16 16"><rect x="1.5" y="2.5" width="13" height="10" fill="#dfe8ee" stroke="#222" stroke-width="1.1"/><rect x="0.0" y="11.0" width="3" height="3" fill="#f4f4f4" stroke="#222" stroke-width="1"/><rect x="13.0" y="1.0" width="3" height="3" fill="#f4f4f4" stroke="#222" stroke-width="1"/></svg>
<svg class="a" style="left:10px;top:222px" width="16" height="16" viewBox="0 0 16 16"><path d="M1.5 14.5 Q3 5 8 4 Q11 2 14.5 1.5" stroke="#222" stroke-width="1.1" fill="none"/><rect x="0.0" y="13.0" width="3" height="3" fill="#f4f4f4" stroke="#222" stroke-width="1"/><rect x="6.5" y="2.5" width="3" height="3" fill="#f4f4f4" stroke="#222" stroke-width="1"/><rect x="13.0" y="0.0" width="3" height="3" fill="#f4f4f4" stroke="#222" stroke-width="1"/></svg>
<svg class="a" style="left:10px;top:244px" width="16" height="16" viewBox="0 0 16 16"><circle cx="8" cy="8" r="7" fill="#f0f0f0" stroke="#222" stroke-width="1.1"/><path d="M8 8 L13 3" stroke="#222" stroke-width="1"/><rect x="6.5" y="6.5" width="3" height="3" fill="#f4f4f4" stroke="#222" stroke-width="1"/></svg>
<svg class="a" style="left:10px;top:266px" width="16" height="16" viewBox="0 0 16 16"><circle cx="5" cy="5" r="4.3" fill="#ececf2" stroke="#222" stroke-width="1"/><circle cx="11" cy="5" r="4.3" fill="#ececf2" stroke="#222" stroke-width="1"/><circle cx="11" cy="11" r="4.3" fill="#ececf2" stroke="#222" stroke-width="1"/><circle cx="5" cy="11" r="4.3" fill="#ececf2" stroke="#222" stroke-width="1"/><circle cx="5" cy="5" r="3.6" fill="#ececf2"/><circle cx="11" cy="5" r="3.6" fill="#ececf2"/><circle cx="11" cy="11" r="3.6" fill="#ececf2"/><circle cx="5" cy="11" r="3.6" fill="#ececf2"/><rect x="4" y="4" width="8" height="8" fill="#ececf2"/></svg>
<svg class="a" style="left:10px;top:288px" width="16" height="16" viewBox="0 0 16 16"><path d="M1.5 15 Q2 6 6 7 Q9 9 11 5 Q13 1 15 1" stroke="#222" stroke-width="1.3" fill="none"/></svg>
<svg class="a" style="left:10px;top:310px" width="16" height="16" viewBox="0 0 16 16"><ellipse cx="8" cy="8" rx="7" ry="5" fill="#f0f0f0" stroke="#222" stroke-width="1.1"/><rect x="-0.5" y="6.5" width="3" height="3" fill="#f4f4f4" stroke="#222" stroke-width="1"/><rect x="13.5" y="6.5" width="3" height="3" fill="#f4f4f4" stroke="#222" stroke-width="1"/><rect x="6.5" y="1.5" width="3" height="3" fill="#f4f4f4" stroke="#222" stroke-width="1"/></svg>
<svg class="a" style="left:10px;top:332px" width="16" height="16" viewBox="0 0 16 16"><path d="M2 9 Q2 3 9 3 Q15 3 15 8 Q15 12 10 13" stroke="#222" stroke-width="1.1" fill="none"/><rect x="0.5" y="7.5" width="3" height="3" fill="#f4f4f4" stroke="#222" stroke-width="1"/><rect x="8.5" y="11.5" width="3" height="3" fill="#f4f4f4" stroke="#222" stroke-width="1"/></svg>
<svg class="a" style="left:10px;top:354px" width="16" height="16" viewBox="0 0 16 16"><path d="M5.5 3 V1 Q5.5 0.5 6 0.5 H13 L15.5 3 V13" fill="#eef0f4" stroke="#222" stroke-width="1.1"/><rect x="1.5" y="6.5" width="9" height="6" fill="#e4ecf2" stroke="#222" stroke-width="1.1"/><circle cx="10" cy="11.5" r="3" fill="#eeeeee" stroke="#222" stroke-width="1"/><path d="M12 16 L16 12 V16Z" fill="#111"/><rect x="0.0" y="11.0" width="3" height="3" fill="#f4f4f4" stroke="#222" stroke-width="1"/></svg>
<svg class="a" style="left:10px;top:376px" width="16" height="16" viewBox="0 0 16 16"><rect x="1.5" y="3.5" width="11" height="7" fill="#e4ecf2" stroke="#222" stroke-width="1.1"/><circle cx="12" cy="10" r="3.5" fill="#eeeeee" stroke="#222" stroke-width="1.1"/><rect x="0.0" y="9.0" width="3" height="3" fill="#f4f4f4" stroke="#222" stroke-width="1"/></svg>
<svg class="a" style="left:10px;top:398px" width="16" height="16" viewBox="0 0 16 16"><rect x="6.5" y="7.5" width="3" height="3" fill="#f4f4f4" stroke="#222" stroke-width="1"/></svg>
<svg class="a" style="left:10px;top:420px" width="16" height="16" viewBox="0 0 16 16"><rect x="3" y="3" width="10" height="10" fill="#e8e8e8"/><path d="M3 7 L7 3 M3 11 L11 3 M5 13 L13 5 M9 13 L13 9" stroke="#666" stroke-width=".8"/><path d="M3 0 V16 M13 0 V16 M0 3 H16 M0 13 H16" stroke="#222" stroke-width="1.1"/><path d="M9 15 L15 9" stroke="#222" stroke-width=".8"/></svg>
<svg class="a" style="left:10px;top:442px" width="16" height="16" viewBox="0 0 16 16"><defs><linearGradient id="gg" x1="0" y1="0" x2="1" y2="1"><stop offset="0" stop-color="#606068"/><stop offset="1" stop-color="#f0f0f0"/></linearGradient></defs><rect x="3" y="3" width="10" height="10" fill="url(#gg)"/><path d="M3 0 V16 M13 0 V16 M0 3 H16 M0 13 H16" stroke="#222" stroke-width="1.1"/><path d="M9 15 L15 9" stroke="#222" stroke-width=".8"/></svg>
<svg class="a" style="left:356px;top:584px" width="11" height="14" viewBox="0 0 11 14"><rect x="4.5" y="0.5" width="6" height="6" fill="#f8f8f8" stroke="#3a3a3a"/><path d="M4.5 6 V11" stroke="#3a3a3a" stroke-width="1"/><circle cx="2.5" cy="11.5" r="2.5" fill="#3a3a3a"/></svg>
<svg class="a" style="left:376px;top:584px" width="19" height="13" viewBox="0 0 19 13"><path d="M4 0.5 V8 M0 4 H8" stroke="#3a8ae0" stroke-width="1.5"/><rect x="6" y="7" width="12" height="5" rx="1" fill="#3a8ae0"/><path d="M8 9.5 H16" stroke="#c0dcf8" stroke-width="1" stroke-dasharray="1 1"/></svg>
<svg class="a" style="left:405px;top:583px" width="15" height="15" viewBox="0 0 15 15"><path d="M1 0.5 V13.5 H14 M1 8.5 H6 V13.5" stroke="#3a8ae0" stroke-width="1.3" fill="none"/></svg>
<svg class="a" style="left:428px;top:583px" width="16" height="15" viewBox="0 0 16 15"><circle cx="7" cy="8" r="6" fill="none" stroke="#3a3a3a" stroke-width="1.5"/><path d="M7 8 L14 1" stroke="#3a3a3a" stroke-width="1.5"/></svg>
<svg class="a" style="left:451px;top:589px" width="7" height="4" viewBox="0 0 7 4"><path d="M0 0H7L3.5 4Z" fill="#111"/></svg>
<svg class="a" style="left:466px;top:580px" width="17" height="18" viewBox="0 0 17 18"><path d="M1 1 L16 17" stroke="#3a3a3a" stroke-width="1.6"/><path d="M8 0 V18" stroke="#3a3a3a" stroke-width="1.2"/></svg>
<svg class="a" style="left:491px;top:589px" width="7" height="4" viewBox="0 0 7 4"><path d="M0 0H7L3.5 4Z" fill="#111"/></svg>
<svg class="a" style="left:505px;top:582px" width="17" height="15" viewBox="0 0 17 15"><path d="M16 1 L2 13.5 H17" stroke="#3a3a3a" stroke-width="1.3" fill="none"/><path d="M8 10 L11 12" stroke="#3a3a3a" stroke-width="2"/></svg>
<svg class="a" style="left:529px;top:581px" width="18" height="18" viewBox="0 0 18 18"><rect x="2.5" y="3.5" width="13" height="13" fill="none" stroke="#3a8ae0" stroke-width="1.6"/><rect x="0.5" y="0.5" width="5" height="5" fill="#22c022" stroke="#111" stroke-width="1"/></svg>
<svg class="a" style="left:554px;top:589px" width="7" height="4" viewBox="0 0 7 4"><path d="M0 0H7L3.5 4Z" fill="#111"/></svg>
<svg class="a" style="left:569px;top:583px" width="18" height="14" viewBox="0 0 18 14"><rect x="0" y="0" width="17" height="2" fill="#3a3a3a"/><rect x="0" y="5" width="17" height="3" fill="#3a3a3a"/><rect x="0" y="10" width="10" height="4" fill="#3a3a3a"/></svg>
<svg class="a" style="left:595px;top:582px" width="17" height="16" viewBox="0 0 17 16"><defs><pattern id="ck" width="2" height="2" patternUnits="userSpaceOnUse"><rect width="1" height="1" fill="#3a8ae0"/><rect x="1" y="1" width="1" height="1" fill="#3a8ae0"/><rect x="1" width="1" height="1" fill="#c8e0f8"/><rect y="1" width="1" height="1" fill="#c8e0f8"/></pattern></defs><rect x="0" y="0" width="17" height="16" fill="#a8d0f8"/><rect x="1" y="1" width="15" height="14" fill="url(#ck)"/></svg>
<svg class="a" style="left:619px;top:582px" width="16" height="16" viewBox="0 0 16 16"><path d="M3 0 V6 M0 3 H6" stroke="#3a3a3a" stroke-width="1.2"/><rect x="5" y="5" width="7" height="7" fill="#7aa860"/><rect x="7" y="7" width="8" height="8" fill="#8ab870" stroke="#6a9850" stroke-width=".5"/></svg>
<svg class="a" style="left:645px;top:581px" width="17" height="17" viewBox="0 0 17 17"><path d="M3 6 L9 3 L15 6 V12 L9 15 L3 12Z M3 6 L9 9 L15 6 M9 9 V15" fill="#f8f8f8" stroke="#3a3a3a" stroke-width="1.3"/><rect x="0.5" y="0.5" width="5" height="5" fill="#22c022" stroke="#111" stroke-width="1"/></svg>
<svg class="a" style="left:669px;top:589px" width="7" height="4" viewBox="0 0 7 4"><path d="M0 0H7L3.5 4Z" fill="#111"/></svg>
<svg class="a" style="left:33px;top:609px" width="17" height="17" viewBox="0 0 17 17"><path d="M2 1 V15 H16 M2 15 L9 8" stroke="#3a3a3a" stroke-width="1.2" fill="none"/><path d="M0 3 L2 0 L4 3 M14 13 L17 15 L14 17" stroke="#3a3a3a" stroke-width="1" fill="none"/><path d="M11 2 L15 4 L12 6 L14 9 L9 6 L12 5Z" fill="#3a3a3a"/></svg>
<svg class="a" style="left:58px;top:609px" width="16" height="16" viewBox="0 0 16 16"><path d="M1 4 L8 1 L15 4 V12 L8 15 L1 12Z M1 4 L8 7 L15 4 M8 7 V15" fill="none" stroke="#8a8a8a" stroke-width="1"/></svg>
<svg class="a" style="left:82px;top:616px" width="7" height="4" viewBox="0 0 7 4"><path d="M0 0H7L3.5 4Z" fill="#111"/></svg>
<svg class="a" style="left:96px;top:609px" width="17" height="16" viewBox="0 0 17 16"><path d="M2 4 L8.5 1 L15 4 V12 L8.5 15 L2 12Z" fill="none" stroke="#8a8a8a" stroke-width="1"/><path d="M8.5 8 V1" stroke="#3a8ae0" stroke-width="1.3"/><path d="M8.5 8 L2 12" stroke="#30a030" stroke-width="1.3"/><path d="M8.5 8 L15 12" stroke="#d04020" stroke-width="1.3"/><circle cx="2" cy="12" r="1.5" fill="#30a030"/><circle cx="15" cy="12" r="1.5" fill="#d04020"/></svg>
<svg class="a" style="left:121px;top:616px" width="7" height="4" viewBox="0 0 7 4"><path d="M0 0H7L3.5 4Z" fill="#111"/></svg>
<svg class="a" style="left:139px;top:609px" width="17" height="18" viewBox="0 0 17 18"><path d="M8 0 Q9.5 8 16 17 Q12 14.5 8 12.5 Q4 14.5 0 17 Q6.5 8 8 0Z" fill="#3a8ae0" transform="translate(0,1)"/><circle cx="12" cy="5" r="3.2" fill="#a8d0f8" stroke="#3a8ae0" stroke-width="1.8"/></svg>
<svg class="a" style="left:164px;top:609px" width="17" height="18" viewBox="0 0 17 18"><path d="M8 0 Q9.5 8 16 17 Q12 14.5 8 12.5 Q4 14.5 0 17 Q6.5 8 8 0Z" fill="#3a3a3a" transform="translate(0,1)"/><path d="M10 1 L14 4 L11 6 L15 9" stroke="#ebebeb" stroke-width="3" fill="none"/><path d="M10 1 L14 4 L11 6 L15 9" stroke="#3a3a3a" stroke-width="1.4" fill="none"/></svg>
<svg class="a" style="left:187px;top:609px" width="17" height="18" viewBox="0 0 17 18"><path d="M8 0 Q9.5 8 16 17 Q12 14.5 8 12.5 Q4 14.5 0 17 Q6.5 8 8 0Z" fill="#3a3a3a" transform="translate(0,1)"/></svg>
<div class="t" style="left:212px;top:609px;font-size:13px;line-height:15px;letter-spacing:-0.3px;color:#111">1:1 / 100%</div>
<svg class="a" style="left:275px;top:616px" width="7" height="4" viewBox="0 0 7 4"><path d="M0 0H7L3.5 4Z" fill="#111"/></svg>
<svg class="a" style="left:294px;top:611px" width="13" height="13" viewBox="0 0 13 13"><circle cx="6.5" cy="6.5" r="4.5" fill="#6a6a6a"/><path d="M6.5 0 V13 M0 6.5 H13 M2 2 L11 11 M11 2 L2 11" stroke="#6a6a6a" stroke-width="2.2"/><circle cx="6.5" cy="6.5" r="1.5" fill="#ebebeb"/></svg>
<svg class="a" style="left:317px;top:616px" width="7" height="4" viewBox="0 0 7 4"><path d="M0 0H7L3.5 4Z" fill="#111"/></svg>
<svg class="a" style="left:334px;top:609px" width="15" height="16" viewBox="0 0 15 16"><path d="M7.5 0 V16 M0 8 H15" stroke="#5a5a5a" stroke-width="1.6"/></svg>
<svg class="a" style="left:364px;top:609px" width="7" height="16" viewBox="0 0 7 16"><rect x="1" y="0" width="5" height="16" fill="#5a5a5a"/><path d="M4 2 H6 M4 5 H6 M4 8 H6 M4 11 H6 M4 14 H6" stroke="#ebebeb" stroke-width="1"/></svg>
<div class="t" style="left:384px;top:609px;font-size:13px;line-height:15px;color:#111;font-weight:bold">小数</div>
<svg class="a" style="left:442px;top:616px" width="7" height="4" viewBox="0 0 7 4"><path d="M0 0H7L3.5 4Z" fill="#111"/></svg>
<svg class="a" style="left:460px;top:609px" width="12" height="15" viewBox="0 0 12 15"><rect x="0.5" y="0.5" width="11" height="14" rx="1.5" fill="#3a8ae0"/><rect x="2.5" y="2.5" width="7" height="3" fill="#e0f0ff"/><path d="M3 8H9M3 10.5H9M3 13H9M5 7V14M7 7V14" stroke="#e0f0ff" stroke-width=".8"/></svg>
<svg class="a" style="left:484px;top:608px" width="17" height="17" viewBox="0 0 17 17"><rect x="0.5" y="0.5" width="14" height="12" fill="#f8f8f8" stroke="#3a3a3a" stroke-width="1"/><path d="M0.5 3.5 H14.5" stroke="#3a3a3a" stroke-width="1"/><rect x="9" y="9" width="7" height="7" fill="#3a3a3a"/><path d="M10 9 V7 Q12.5 5 15 7 V9" stroke="#3a3a3a" stroke-width="1.2" fill="none"/></svg>
<svg class="a" style="left:508px;top:616px" width="7" height="4" viewBox="0 0 7 4"><path d="M0 0H7L3.5 4Z" fill="#111"/></svg>
<svg class="a" style="left:524px;top:608px" width="17" height="17" viewBox="0 0 17 17"><rect x="0.5" y="0.5" width="7" height="7" fill="none" stroke="#3a3a3a" stroke-width="1.1"/><circle cx="12.5" cy="5.5" r="3.5" fill="none" stroke="#3a3a3a" stroke-width="1.1"/><path d="M5 9.5 L9 16 H1Z" fill="none" stroke="#3a3a3a" stroke-width="1.1"/></svg>
<svg class="a" style="left:549px;top:607px" width="17" height="19" viewBox="0 0 17 19"><rect x="0" y="0" width="17" height="19" fill="#b8d8f8"/><rect x="2.5" y="3.5" width="8" height="8" fill="none" stroke="#3a7ad0" stroke-width="1.5"/><rect x="6.5" y="7.5" width="8" height="8" fill="none" stroke="#3a7ad0" stroke-width="1.5"/></svg>
<svg class="a" style="left:575px;top:608px" width="19" height="19" viewBox="0 0 19 19"><circle cx="9.5" cy="9.5" r="9" fill="#1a5aa8"/><circle cx="9.5" cy="9.5" r="7" fill="#2a6ac0"/><path d="M6 10 L9 13 L14 7" stroke="#5aa0f0" stroke-width="1.3" fill="none"/></svg>
<svg class="a" style="left:604px;top:608px" width="19" height="19" viewBox="0 0 19 19"><rect x="0.5" y="0.5" width="17" height="16" fill="#f8f8f8" stroke="#3a3a3a" stroke-width="1.1"/><path d="M1 15 Q5 2 9 5 Q12 9 15 15" stroke="#3a3a3a" stroke-width="1.1" fill="none"/><circle cx="14" cy="16" r="3" fill="#f08010"/></svg>
<svg class="a" style="left:636px;top:610px" width="16" height="14" viewBox="0 0 16 14"><rect x="0.5" y="0.5" width="15" height="13" fill="none" stroke="#3a3a3a" stroke-width="1.2"/><path d="M3 11 L7 7 M3 11 V8 M3 11 H6 M13 3 L9 7 M13 3 V6 M13 3 H10" stroke="#3a3a3a" stroke-width="1.4" fill="none"/></svg>
<svg class="a" style="left:661px;top:610px" width="16" height="15" viewBox="0 0 16 15"><path d="M0 1.5 H16 M0 7.5 H16 M0 13.5 H16" stroke="#3a3a3a" stroke-width="2"/></svg></body></html>
